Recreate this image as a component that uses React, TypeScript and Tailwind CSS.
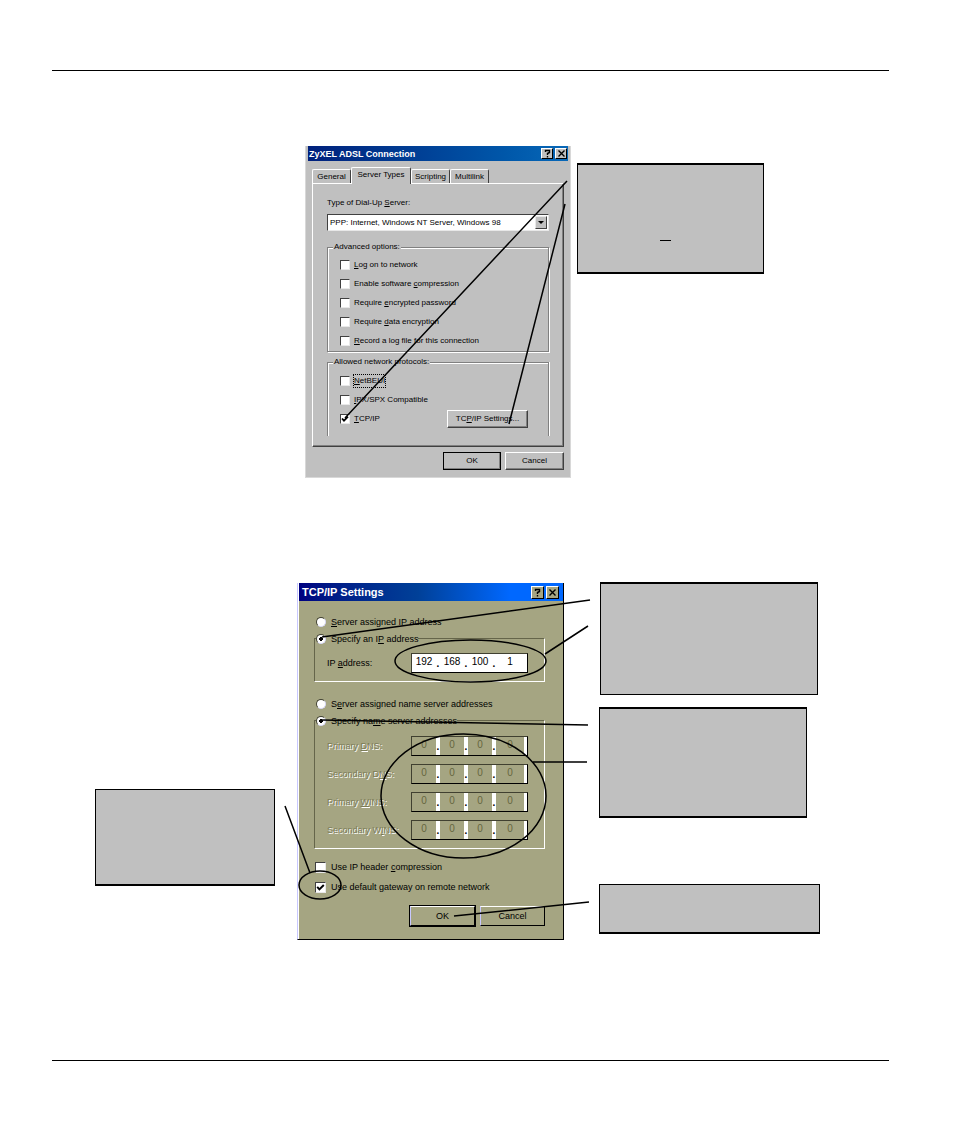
import type { ReactNode } from "react"
import clsx from "clsx"

const tabs = ["General", "Server Types", "Scripting", "Multilink"]

const advanced = [
  { id: "logon", label: <><u>L</u>og on to network</> },
  { id: "compress", label: <>Enable software <u>c</u>ompression</> },
  { id: "password", label: <>Require <u>e</u>ncrypted password</> },
  { id: "encrypt", label: <>Require <u>d</u>ata encryption</> },
  { id: "log", label: <><u>R</u>ecord a log file for this connection</> },
]

const protocols = [
  { id: "netbeui", label: <><u>N</u>etBEUI</>, focused: true },
  { id: "ipx", label: <><u>I</u>PX/SPX Compatible</> },
  { id: "tcpip", label: <><u>T</u>CP/IP</>, checked: true },
]

const servers = [
  { id: "dns1", label: <>Primary <u>D</u>NS:</> },
  { id: "dns2", label: <>Secondary D<u>N</u>S:</> },
  { id: "wins1", label: <>Primary <u>W</u>INS:</> },
  { id: "wins2", label: <>Secondary W<u>I</u>NS:</> },
]

function Callout({ className, children }: { className?: string; children?: ReactNode }) {
  return <div className={clsx("border border-black bg-[#c0c0c0]", className)}>{children}</div>
}

function TitleButtons({ className }: { className: string }) {
  return (
    <>
      <button
        aria-label="Help"
        className={clsx("ml-auto flex items-center justify-center border border-t-white border-l-white border-r-black border-b-black", className)}
      >
        <svg viewBox="0 0 9 9" className="size-[9px]" fill="none" stroke="#000" strokeWidth="1.4">
          <path d="M2.5 3V1.5h4v2l-2 1V6M4.5 7v1.4" />
        </svg>
      </button>
      <button
        aria-label="Close"
        className={clsx("ml-[2px] flex items-center justify-center border border-t-white border-l-white border-r-black border-b-black", className)}
      >
        <svg viewBox="0 0 9 9" className="size-[9px]" stroke="#000" strokeWidth="1.4">
          <path d="M1.5 1.5l6 6M7.5 1.5l-6 6" />
        </svg>
      </button>
    </>
  )
}

function Check({ id, label, checked, focused, large }: {
  id: string
  label: ReactNode
  checked?: boolean
  focused?: boolean
  large?: boolean
}) {
  return (
    <div className={clsx("flex items-center", large ? "h-5 gap-[5px]" : "h-[19px] gap-1")}>
      <span className="relative flex">
        <input
          id={id}
          type="checkbox"
          defaultChecked={checked}
          className={clsx(
            "peer appearance-none border border-t-[#404040] border-l-[#404040] border-r-[#e8e8e8] border-b-[#e8e8e8] bg-white",
            large ? "size-[11px]" : "size-[10px]",
          )}
        />
        <svg
          viewBox="0 0 10 10"
          className="pointer-events-none absolute inset-0 hidden size-full peer-checked:block"
          fill="none"
          stroke="#000"
          strokeWidth="1.8"
        >
          <path d="M2 4.5l2 2.2L8 2.7" />
        </svg>
      </span>
      <label htmlFor={id} className={clsx(focused && "outline outline-dotted outline-black")}>
        {label}
      </label>
    </div>
  )
}

function Radio({ id, name, label, checked }: {
  id: string
  name: string
  label: ReactNode
  checked?: boolean
}) {
  return (
    <div className="flex h-[17px] items-center gap-[5px]">
      <input
        id={id}
        name={name}
        type="radio"
        defaultChecked={checked}
        className="size-[10px] appearance-none rounded-full border border-t-[#404030] border-l-[#404030] border-r-[#d8d8f8] border-b-[#d8d8f8] bg-white checked:bg-[radial-gradient(circle,#000_0_2px,#fff_2px)]"
      />
      <label htmlFor={id}>{label}</label>
    </div>
  )
}

function IpField({ label, values, disabled }: { label: string; values: string[]; disabled?: boolean }) {
  return (
    <div
      role="group"
      aria-label={label}
      className="flex h-5 w-[117px] shrink-0 border border-t-[#404030] border-l-[#404030] border-r-black border-b-black bg-white text-[10px] text-black"
    >
      {values.map((v, i) => (
        <div key={i} className="flex flex-1 last:pr-[3px]">
          <input
            aria-label={`${label} ${i + 1}`}
            defaultValue={v}
            disabled={disabled}
            className={clsx(
              "h-full w-0 flex-1 pb-1 text-center",
              disabled ? "bg-[#a5a582] text-[#65653f]" : "bg-white",
            )}
          />
          {i < 3 && <span className="w-1 text-center font-bold leading-5">.</span>}
        </div>
      ))}
    </div>
  )
}

function ServerTypes() {
  const button =
    "h-[18px] border border-t-white border-l-white border-r-[#404040] border-b-[#404040] shadow-[inset_-1px_-1px_0_#808080]"

  return (
    <section className="w-[266px] border-x border-b border-[#d8d8d8] bg-[#c0c0c0] px-[2px] font-['Liberation_Sans',sans-serif] text-[8px] leading-3 whitespace-nowrap">
      <header className="flex h-[15px] items-center bg-linear-to-r from-[#00207c] to-[#0868b8] pr-px">
        <h2 className="pl-px text-[9px] font-bold text-white">ZyXEL ADSL Connection</h2>
        <TitleButtons className="h-[11px] w-3 bg-[#c0c0c0]" />
      </header>
      <div className="px-1 pt-[6px] pb-[7px]">
        <div role="tablist" className="flex items-end">
          {tabs.map((tab) => (
            <button
              key={tab}
              role="tab"
              aria-selected={tab === "Server Types"}
              className={clsx(
                "rounded-t-xs border border-b-0 border-t-white border-l-white border-r-[#404040]",
                tab === "Server Types"
                  ? "-mb-px h-[17px] w-[60px] bg-[#c0c0c0] pb-[2px]"
                  : "h-[14px] w-[39px]",
              )}
            >
              {tab}
            </button>
          ))}
        </div>
        <div className="border border-t-white border-l-white border-r-[#404040] border-b-[#404040] px-[14px] pt-[13px] pb-[10px] shadow-[inset_-1px_-1px_0_#808080]">
          <label htmlFor="server-type" className="block">
            Type of Dial-Up <u>S</u>erver:
          </label>
          <div className="relative mt-[5px]">
            <select
              id="server-type"
              className="block h-[17px] w-full appearance-none border border-t-[#404040] border-l-[#404040] border-r-[#e8e8e8] border-b-[#e8e8e8] bg-white pl-[2px]"
            >
              <option>PPP: Internet, Windows NT Server, Windows 98</option>
            </select>
            <span className="pointer-events-none absolute top-[2px] right-[2px] flex h-[13px] w-3 items-center justify-center border border-r-[#404040] border-b-[#404040] border-[#e8e8e8] bg-[#c0c0c0]">
              <svg viewBox="0 0 6 3" className="h-[3px] w-[6px]">
                <path d="M0 0h6L3 3z" />
              </svg>
            </span>
          </div>
          <fieldset className="mt-[10px] border border-[#808080] pl-3 shadow-[1px_1px_0_#fff,inset_1px_1px_0_#fff]">
            <legend className="-ml-[7px] bg-[#c0c0c0] px-px">Advanced options:</legend>
            <div className="pt-[2px] pb-px">
              {advanced.map((item) => (
                <Check key={item.id} {...item} />
              ))}
            </div>
          </fieldset>
          <fieldset className="mt-1 border border-b-0 border-[#808080] pl-3 shadow-[1px_0_0_#fff,inset_1px_1px_0_#fff]">
            <legend className="-ml-[7px] bg-[#c0c0c0] px-px">Allowed network protocols:</legend>
            <div className="flex items-end justify-between pt-[3px] pr-5 pb-2">
              <div>
                {protocols.map((item) => (
                  <Check key={item.id} {...item} />
                ))}
              </div>
              <button className={clsx("w-[81px]", button)}>
                TC<u>P</u>/IP Settings...
              </button>
            </div>
          </fieldset>
        </div>
        <div className="flex justify-end gap-1 pt-[5px]">
          <button className={clsx("w-[58px] outline outline-black -outline-offset-1", button)}>OK</button>
          <button className={clsx("w-[59px]", button)}>Cancel</button>
        </div>
      </div>
    </section>
  )
}

function TcpIpSettings() {
  const button = "h-5 w-[65px] border border-t-white border-l-[#c8c8ff] border-r-black border-b-black"
  const group = "border border-t-[#65654a] border-l-[#65654a] border-white pr-4 pl-3"

  return (
    <section className="mt-px w-[267px] border-r border-b border-l border-r-black border-b-black border-l-[#c8c8ff] bg-[#a5a582] font-['Liberation_Sans',sans-serif] text-[9px] leading-3 whitespace-nowrap shadow-[inset_1px_0_0_#fff]">
      <header className="ml-px flex h-[18px] items-center bg-linear-to-r from-[#000080] via-[#004098] via-45% to-[#0068ff] to-80% pr-1">
        <h2 className="pl-[3px] text-[11px] font-bold text-white">TCP/IP Settings</h2>
        <TitleButtons className="size-[13px] bg-[#a5a582]" />
      </header>
      <div className="pt-3 pr-[18px] pb-[13px] pl-4">
        <div className="pl-[2px]">
          <Radio id="ip-auto" name="ip" label={<><u>S</u>erver assigned IP address</>} />
        </div>
        <fieldset className={group}>
          <legend className="-ml-[11px]">
            <Radio id="ip-manual" name="ip" checked label={<>Specify an I<u>P</u> address</>} />
          </legend>
          <div className="flex items-center justify-between pt-[6px] pb-2">
            <span>
              IP <u>a</u>ddress:
            </span>
            <IpField label="IP address" values={["192", "168", "100", "1"]} />
          </div>
        </fieldset>
        <div className="mt-[13px] pl-[2px]">
          <Radio id="ns-auto" name="ns" label={<>S<u>e</u>rver assigned name server addresses</>} />
        </div>
        <fieldset className={group}>
          <legend className="-ml-[11px]">
            <Radio id="ns-manual" name="ns" checked label={<>Specify na<u>m</u>e server addresses</>} />
          </legend>
          <div className="flex flex-col gap-2 pt-[7px] pb-2">
            {servers.map((server) => (
              <div key={server.id} className="flex items-center justify-between">
                <span className="text-[#7c7c58] [text-shadow:1px_1px_0_#fff]">{server.label}</span>
                <IpField label={server.id} values={["0", "0", "0", "0"]} disabled />
              </div>
            ))}
          </div>
        </fieldset>
        <div className="mt-2 pl-px">
          <Check large id="header" label={<>Use IP header <u>c</u>ompression</>} />
          <Check large checked id="gateway" label={<>Use default <u>g</u>ateway on remote network</>} />
        </div>
        <div className="mt-[9px] flex justify-end gap-[5px]">
          <button className={clsx(button, "outline outline-black")}>OK</button>
          <button className={button}>Cancel</button>
        </div>
      </div>
    </section>
  )
}

export default function App() {
  return (
    <main className="bg-white pr-[65px] pl-[52px] text-black">
      <div className="h-[71px] border-b border-black" />

      <figure className="relative mt-[75px] ml-[253px] flex w-fit items-start gap-[6px]">
        <ServerTypes />
        <Callout className="mt-[17px] h-[111px] w-[187px] border-y-2 pt-[75px] pl-[82px]">
          <div className="w-[11px] border-b border-black" />
        </Callout>
        <svg
          viewBox="0 0 459 332"
          className="pointer-events-none absolute top-0 left-0 h-[332px] w-[459px]"
          fill="none"
          stroke="#000"
          strokeWidth="1.5"
        >
          <path d="M262 35L40 272M260 58L204 278" />
        </svg>
      </figure>

      <figure className="relative mt-[104px] ml-[43px] flex w-fit items-start">
        <Callout className="mt-[207px] mr-[22px] h-[97px] w-[180px] border-b-2" />
        <TcpIpSettings />
        <div className="ml-[35px]">
          <Callout className="ml-px h-[113px] w-[218px] border-t-2" />
          <Callout className="mt-3 h-[111px] w-[208px] border-y-2" />
          <Callout className="mt-[66px] h-[50px] w-[221px] border-b-2" />
        </div>
        <svg
          viewBox="0 0 725 358"
          className="pointer-events-none absolute top-0 left-0 h-[358px] w-[725px]"
          fill="none"
          stroke="#000"
          strokeWidth="1.5"
        >
          <path d="M495 18L227 55M493 44L450 72M227 138L493 143M438 180H492M190 224L215 291M359 334L494 320" />
          <ellipse cx="375.5" cy="79" rx="75.5" ry="21" />
          <ellipse cx="368.5" cy="214" rx="82.5" ry="62" />
          <ellipse cx="225" cy="303" rx="21" ry="14" />
        </svg>
      </figure>

      <div className="mt-[120px] h-[72px] border-t border-black" />
    </main>
  )
}
